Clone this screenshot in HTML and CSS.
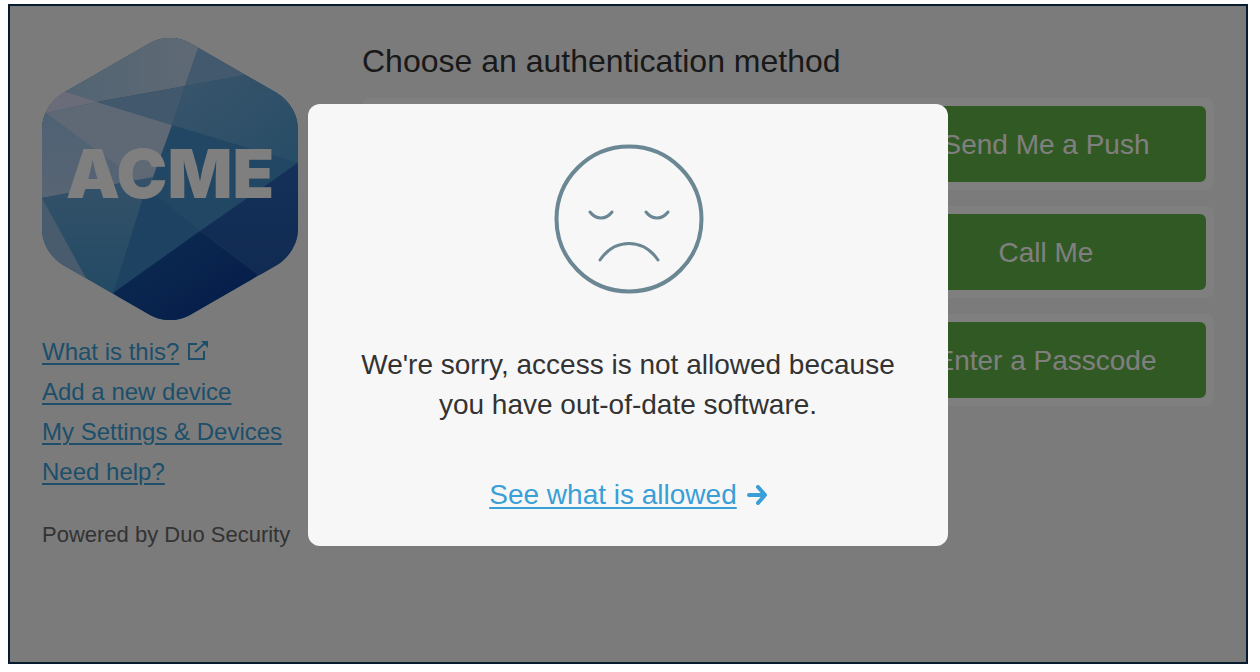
FILE: index.html
```html
<!DOCTYPE html>
<html lang="en">
<head>
    <meta charset="utf-8">
    <title>Choose an authentication method</title>
    <link rel="stylesheet" href="styles.css">
</head>
<body>

    <div class="frame">
        <aside class="sidebar">
            <svg class="logo" viewBox="0 0 256 282" role="img" aria-label="ACME">
                <defs>
                    <clipPath id="hexagon">
                        <path d="M108 5C120 -2 136 -2 148 5L235 55C248 63 256 77 256 91V191C256 205 248 219 235 227L148 277C136 284 120 284 108 277L21 227C8 219 0 205 0 191V91C0 77 8 63 21 55Z"/>
                    </clipPath>
                    <linearGradient id="top" x1="0" y1="0" x2="1" y2="0">
                        <stop offset="0" stop-color="#a0c6e4"/>
                        <stop offset="1" stop-color="#c0d4ea"/>
                    </linearGradient>
                    <linearGradient id="right" x1="0" y1="0" x2="1" y2="1">
                        <stop offset="0" stop-color="#76acd8"/>
                        <stop offset="1" stop-color="#4c98cc"/>
                    </linearGradient>
                    <linearGradient id="left" x1="0" y1="0" x2="0" y2="1">
                        <stop offset="0" stop-color="#9cc4e8"/>
                        <stop offset="1" stop-color="#b0cae8"/>
                    </linearGradient>
                    <linearGradient id="lower-left" x1="0" y1="0" x2="0" y2="1">
                        <stop offset="0" stop-color="#6aa4d2"/>
                        <stop offset="1" stop-color="#4694ca"/>
                    </linearGradient>
                    <linearGradient id="lower-right" x1="0" y1="0" x2="0" y2="1">
                        <stop offset="0" stop-color="#2a62b4"/>
                        <stop offset="1" stop-color="#2256a4"/>
                    </linearGradient>
                    <linearGradient id="bottom" x1="0" y1="0" x2="1" y2="1">
                        <stop offset="0" stop-color="#1a5aa4"/>
                        <stop offset="1" stop-color="#083490"/>
                    </linearGradient>
                </defs>
                <g clip-path="url(#hexagon)">
                    <rect width="256" height="282" fill="#448ec8"/>
                    <path fill="url(#top)" d="M0 0V76L55 64L143 48L160 0Z"/>
                    <path fill="#d4d8f4" d="M0 76L55 64L24 54L0 40Z"/>
                    <path fill="#86b4dc" d="M156 10L143 48L203 37L220 0H160Z"/>
                    <path fill="#82b0da" d="M55 64L143 48L130 87Z"/>
                    <path fill="url(#right)" d="M143 48L203 37L270 20V129L130 87Z"/>
                    <path fill="#bcd2ea" d="M0 76L55 64L130 87L111 139L104 150Z"/>
                    <path fill="url(#left)" d="M0 72L76 128L104 150L111 139L0 160Z"/>
                    <path fill="url(#lower-left)" d="M0 160L111 139L104 160L71 256L44 240Z"/>
                    <path fill="#90b8dc" d="M0 160L44 240L0 230Z"/>
                    <path fill="#3a84c4" d="M104 150L158 193L71 256Z"/>
                    <path fill="url(#lower-right)" d="M260 122L158 193L216 237L260 230Z"/>
                    <path fill="url(#bottom)" d="M158 193L216 237L150 290H108L71 255Z"/>
                </g>
                <text class="logo-text" x="128" y="160" text-anchor="middle">ACME</text>
            </svg>

            <ul class="links">
                <li>
                    <a href="#">What is this?</a>
                    <svg class="external" viewBox="0 0 20 20" aria-hidden="true">
                        <path d="M9 3H1V18H16V10M7 11L17 2" fill="none" stroke="currentColor" stroke-width="2"/>
                        <path d="M13 0H20V7Z" fill="currentColor"/>
                    </svg>
                </li>
                <li><a href="#">Add a new device</a></li>
                <li><a href="#">My Settings &amp; Devices</a></li>
                <li><a href="#">Need help?</a></li>
            </ul>
            <p class="powered">Powered by Duo Security</p>
        </aside>

        <main class="methods">
            <h1>Choose an authentication method</h1>
            <div class="method"><button type="button">Send Me a Push</button></div>
            <div class="method"><button type="button">Call Me</button></div>
            <div class="method"><button type="button">Enter a Passcode</button></div>
        </main>

        <div class="overlay">
            <div class="modal" role="dialog" aria-modal="true" aria-labelledby="message">
                <svg class="sad-face" viewBox="0 0 150 150" aria-hidden="true">
                    <circle cx="76" cy="75" r="72.5" stroke-width="4"/>
                    <path d="M37 68C43 76 53 76 59 68M93 68C99 76 109 76 115 68" stroke-width="3"/>
                    <path d="M47 116C62 94 90 94 105 116" stroke-width="3"/>
                </svg>
                <p id="message">We're sorry, access is not allowed because you have out-of-date software.</p>
                <div class="allowed">
                    <a href="#">See what is allowed</a>
                    <svg class="arrow" viewBox="0 0 20 20" aria-hidden="true">
                        <path d="M2 10H18M11 2L18 10L11 18"/>
                    </svg>
                </div>
            </div>
        </div>
    </div>

</body>
</html>
```

FILE: styles.css
```css
* {
    box-sizing: border-box;
}

body {
    margin: 4px 12px 8px 8px;
    background-color: #fff;
    color: #333;
    font-family: "Liberation Sans", Arial, Helvetica, sans-serif;
}

a {
    color: #3a9fd6;
    text-decoration: underline;
    text-decoration-thickness: 2px;
    text-underline-offset: 3px;
}

.frame {
    position: relative;
    display: flex;
    gap: 64px;
    min-height: calc(100vh - 12px);
    padding: 32px;
    border: 2px solid #071d2f;
    background-color: #f7f7f7;
}

.sidebar {
    flex: 0 0 256px;
}

.logo {
    display: block;
    width: 100%;
}

.logo-text {
    fill: #fff;
    font-family: Inter, "Open Sans", sans-serif;
    font-size: 68px;
    font-weight: 900;
}

.links {
    margin: 12px 0 28px;
    padding: 0;
    list-style: none;
    color: #3a9fd6;
    font-size: 24px;
    line-height: 40px;
}

.external {
    width: 20px;
    height: 20px;
    margin-left: 2px;
    vertical-align: -1px;
}

.powered {
    margin: 0;
    color: #666;
    font-size: 22px;
    line-height: 30px;
    white-space: nowrap;
}

.methods {
    flex: 1;
}

h1 {
    margin: 0 0 14px;
    font-size: 32px;
    font-weight: normal;
    line-height: 46px;
}

.method {
    display: flex;
    justify-content: flex-end;
    margin-bottom: 16px;
    padding: 8px;
    border-radius: 8px;
    background-color: #fff;
}

button {
    width: 320px;
    height: 76px;
    padding: 2px 0 0;
    border: none;
    border-radius: 6px;
    background-color: #63b246;
    color: #fff;
    font-family: inherit;
    font-size: 28px;
    cursor: pointer;
}

.overlay {
    position: absolute;
    inset: 0;
    display: flex;
    justify-content: center;
    align-items: flex-start;
    padding-top: 98px;
    background-color: rgba(0, 0, 0, 0.5);
}

.modal {
    width: 640px;
    max-width: 100%;
    padding: 40px 48px 31px;
    border-radius: 12px;
    background-color: #f7f7f7;
    font-size: 28px;
    line-height: 40px;
    text-align: center;
}

.modal p {
    margin: 51px 0 50px;
}

.sad-face {
    display: block;
    width: 150px;
    height: 150px;
    margin: 0 auto;
    overflow: visible;
    fill: none;
    stroke: #6b8794;
    stroke-linecap: round;
}

.allowed {
    display: flex;
    justify-content: center;
    align-items: center;
    gap: 10px;
}

.arrow {
    width: 20px;
    height: 20px;
    fill: none;
    stroke: #3a9fd6;
    stroke-width: 4;
    stroke-linecap: round;
    stroke-linejoin: round;
}
```
